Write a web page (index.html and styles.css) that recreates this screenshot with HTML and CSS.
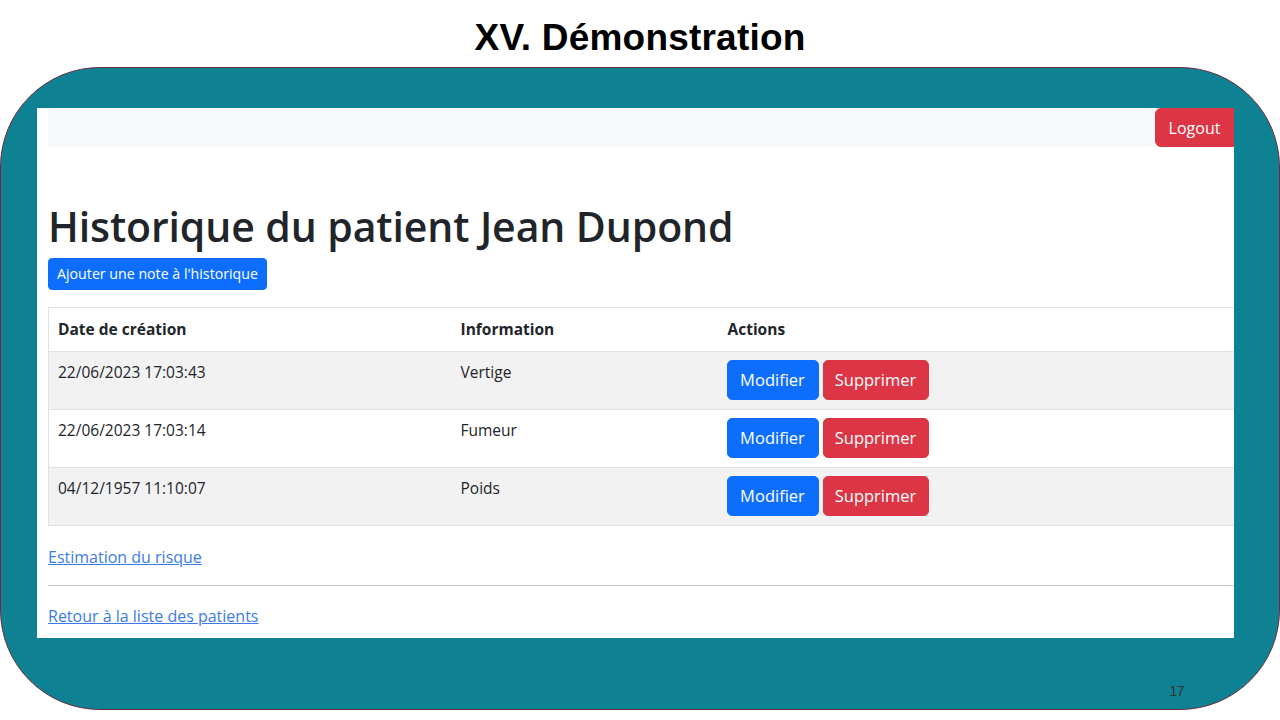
FILE: index.html
```html
<!DOCTYPE html>
<html lang="fr">
<head>
<meta charset="utf-8">
<title>XV. Démonstration</title>
<link rel="stylesheet" href="styles.css">
</head>
<body>
<div class="slide">
  <h1 class="slide-title">XV. Démonstration</h1>
  <div class="frame">
    <div class="screen">
      <nav class="navbar">
        <button class="btn btn-danger btn-logout">Logout</button>
      </nav>
      <h2 class="page-title">Historique du patient Jean Dupond</h2>
      <button class="btn btn-primary btn-sm">Ajouter une note à l'historique</button>
      <table class="table">
        <thead>
          <tr><th class="c1">Date de création</th><th class="c2">Information</th><th class="c3">Actions</th></tr>
        </thead>
        <tbody>
          <tr class="odd"><td>22/06/2023 17:03:43</td><td>Vertige</td><td><div class="actions"><button class="btn btn-primary">Modifier</button><button class="btn btn-danger">Supprimer</button></div></td></tr>
          <tr><td>22/06/2023 17:03:14</td><td>Fumeur</td><td><div class="actions"><button class="btn btn-primary">Modifier</button><button class="btn btn-danger">Supprimer</button></div></td></tr>
          <tr class="odd"><td>04/12/1957 11:10:07</td><td>Poids</td><td><div class="actions"><button class="btn btn-primary">Modifier</button><button class="btn btn-danger">Supprimer</button></div></td></tr>
        </tbody>
      </table>
      <a class="link link-first" href="#">Estimation du risque</a>
      <hr class="sep">
      <a class="link link-last" href="#">Retour à la liste des patients</a>
    </div>
    <div class="page-num">17</div>
  </div>
</div>
</body>
</html>
```
FILE: styles.css
```css
* { box-sizing: border-box; }
html, body { margin: 0; padding: 0; background: #ffffff; }
.slide { width: 1280px; height: 720px; overflow: hidden; background: #ffffff; }
.slide-title {
  margin: 0;
  height: 67px;
  padding-top: 8px;
  line-height: 59px;
  text-align: center;
  font-family: "Liberation Sans", Arial, sans-serif;
  font-weight: 700;
  font-size: 37px;
  color: #000;
  letter-spacing: 0.2px;
}
.frame {
  width: 1280px;
  height: 643px;
  border: 1px solid #6e2a3f;
  border-radius: 100px;
  background: #0e8193;
  padding: 40px 45px 0 36px;
  display: flex;
  flex-direction: column;
}
.screen {
  background: #ffffff;
  height: 530px;
  padding-left: 11px;
  overflow: hidden;
  font-family: "Open Sans", "Noto Sans", sans-serif;
  color: #212529;
  display: flex;
  flex-direction: column;
  align-items: flex-start;
}
.navbar {
  align-self: stretch;
  height: 39px;
  background: #f8f9fa;
  display: flex;
  justify-content: flex-end;
}
.btn {
  font-family: "Open Sans", "Noto Sans", sans-serif;
  border: 1px solid transparent;
  border-radius: 5px;
  color: #ffffff;
  font-size: 16px;
  line-height: 26px;
  padding: 6px 13px;
  cursor: pointer;
}
.btn-primary { background: #0d6efd; border-color: #0d6efd; }
.btn-danger { background: #dc3545; border-color: #dc3545; }
.btn-logout { height: 39px; width: 79px; padding: 0; border-radius: 6px 0 0 6px; }
.btn-sm {
  margin-top: 8px;
  height: 32px;
  width: 219px;
  padding: 0 4px;
  font-size: 14.2px;
  line-height: 30px;
  border-radius: 4px;
}
.page-title {
  margin: 55px 0 0 0;
  font-size: 41px;
  line-height: 48px;
  font-weight: 600;
  color: #212529;
  letter-spacing: -0.1px;
}
.table {
  margin-top: 17px;
  width: 1200px;
  border-collapse: collapse;
  font-size: 15.5px;
  border: 1px solid #dee2e6;
}
.table th, .table td {
  text-align: left;
  vertical-align: top;
  padding: 8px 9px;
  border-top: 1px solid #dee2e6;
  line-height: 24px;
}
.table th { padding-top: 9px; padding-bottom: 10px; font-weight: 700; }
.c1 { width: 403px; }
.c2 { width: 267px; }
.table td { height: 58px; }
.table tr.odd td { background: #f2f2f2; }
.actions { display: flex; gap: 4px; margin-left: -1px; }
.actions .btn { height: 40px; font-size: 16.5px; }
.actions .btn-primary { width: 92px; padding: 0; }
.actions .btn-danger { width: 106px; padding: 0; }
.link {
  font-size: 16px;
  line-height: 24px;
  color: #3b7be8;
  text-decoration: underline;
}
.link-first { margin-top: 19px; }
.sep {
  align-self: stretch;
  margin: 16px 0 0 0;
  border: 0;
  border-top: 1px solid #c8c8c8;
  height: 0;
}
.link-last { margin-top: 18px; }
.page-num {
  margin-top: 45px;
  align-self: flex-end;
  margin-right: 50px;
  font-family: "Liberation Sans", Arial, sans-serif;
  font-size: 14px;
  line-height: 16px;
  color: #333;
  letter-spacing: -0.5px;
}
```
